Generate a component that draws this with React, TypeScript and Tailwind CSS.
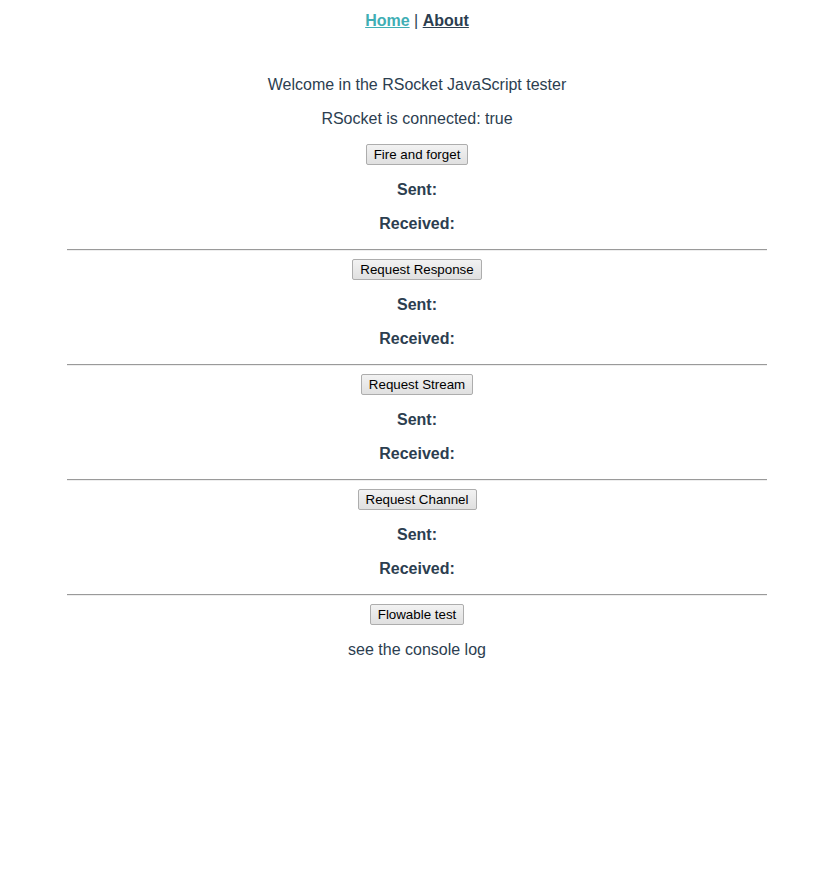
const SECTIONS = [
  "Request Response",
  "Request Stream",
  "Request Channel",
];

function Btn({ label }: { label: string }) {
  return (
    <div className="flex justify-center">
      <button className="h-[21px] rounded-[2px] border border-[#adadad] bg-gradient-to-b from-[#f2f2f2] to-[#e0e0e0] px-[7px] text-[13.333px] leading-none text-black">
        {label}
      </button>
    </div>
  );
}

function Rows() {
  return (
    <>
      <p className="my-4 font-bold leading-[18px]">Sent:</p>
      <p className="my-4 font-bold leading-[18px]">Received:</p>
    </>
  );
}

function Hr() {
  return (
    <div className="mx-auto my-2 h-[2px] w-[700px] border-t border-b border-t-[#9a9a9a] border-b-[#eeeeee]" />
  );
}

export default function App() {
  return (
    <div
      className="min-h-[873px] bg-white pl-[17px] text-center text-[16px] text-[#2c3e50]"
      style={{ fontFamily: '"Liberation Sans", Arial, sans-serif' }}
    >
      {/* nav */}
      <div className="pt-[12px] leading-[18px]">
        <a className="font-bold text-[#40aeb4] underline">Home</a> |{" "}
        <a className="font-bold underline">About</a>
      </div>

      <div className="mt-[46px]">
        <p className="mb-4 leading-[18px]">Welcome in the RSocket JavaScript tester</p>
        <p className="my-4 leading-[18px]">RSocket is connected: true</p>
        <Btn label="Fire and forget" />
        <Rows />
        {SECTIONS.map((s) => (
          <div key={s}>
            <Hr />
            <Btn label={s} />
            <Rows />
          </div>
        ))}
        <Hr />
        <Btn label="Flowable test" />
        <p className="my-4 leading-[18px]">see the console log</p>
      </div>
    </div>
  );
}
